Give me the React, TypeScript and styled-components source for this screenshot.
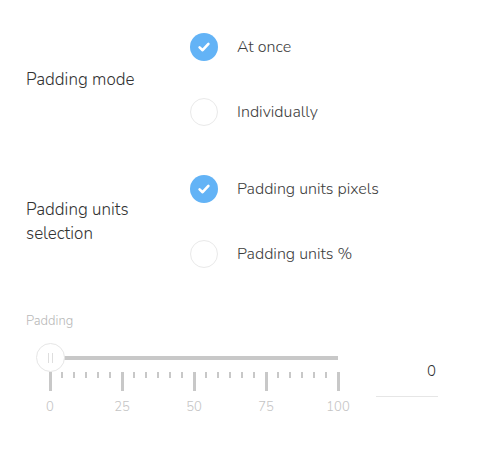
import React from "react";
import styled, { createGlobalStyle } from "styled-components";

const Global = createGlobalStyle`
  html, body { margin: 0; padding: 0; background: #fff; }
  body { font-family: "Nunito", "Noto Sans", "Open Sans", sans-serif; font-weight: 300; }
`;

const Page = styled.div`
  padding: 33px 0 0 26px;
  width: 480px;
  box-sizing: border-box;
`;

const Section = styled.div<{ $gapAfter: number }>`
  display: flex;
  align-items: center;
  margin-bottom: ${(p) => p.$gapAfter}px;
`;

const Label = styled.div`
  width: 164px;
  font-size: 17px;
  line-height: 24px;
  color: #333;
`;

const Options = styled.div`
  display: flex;
  flex-direction: column;
  gap: 37px;
`;

const Option = styled.div`
  display: flex;
  align-items: center;
  gap: 19px;
  height: 28px;
  font-size: 16px;
  color: #3d3d3d;
`;

const Circle = styled.div<{ $checked: boolean }>`
  width: 28px;
  height: 28px;
  border-radius: 50%;
  box-sizing: border-box;
  display: flex;
  align-items: center;
  justify-content: center;
  background: ${(p) => (p.$checked ? "#63b3f6" : "#fff")};
  border: ${(p) => (p.$checked ? "none" : "1px solid #e9e9e9")};
`;

const SliderTitle = styled.div`
  font-size: 13px;
  line-height: 16px;
  color: #b8b8b8;
  margin-top: -2px;
  margin-bottom: 17px;
`;

const SliderRow = styled.div`
  display: flex;
  align-items: flex-start;
`;

const SliderArea = styled.div`
  position: relative;
  margin-left: 24px;
  width: 288px;
  height: 80px;
`;

const Track = styled.div`
  position: absolute;
  left: 0;
  right: 0;
  top: 10px;
  height: 4px;
  background: #c8c8c8;
`;

const Thumb = styled.div`
  position: absolute;
  left: -14px;
  top: -3px;
  width: 29px;
  height: 29px;
  box-sizing: border-box;
  border-radius: 50%;
  background: #fff;
  border: 1px solid #e6e6e6;
  display: flex;
  align-items: center;
  justify-content: center;
  gap: 3px;
  &::before,
  &::after {
    content: "";
    width: 1px;
    height: 10px;
    background: #dedede;
  }
`;

const Tick = styled.div<{ $major: boolean }>`
  position: absolute;
  top: 26px;
  width: ${(p) => (p.$major ? 3 : 2)}px;
  margin-left: -1px;
  height: ${(p) => (p.$major ? 19 : 6)}px;
  background: #c8c8c8;
`;

const TickLabel = styled.div`
  position: absolute;
  top: 53px;
  transform: translateX(-50%);
  font-size: 13px;
  line-height: 16px;
  color: #c4c4c4;
`;

const ValueBox = styled.div`
  margin-left: 38px;
  margin-top: 15px;
  width: 62px;
  height: 36px;
  box-sizing: border-box;
  border-bottom: 1px solid #e6e6e6;
  text-align: right;
  padding-right: 2px;
  font-size: 15px;
  line-height: 20px;
  color: #333;
`;

const Check = () => (
  <svg width="14" height="14" viewBox="0 0 14 14">
    <path
      d="M2.6 7.4 L5.6 10.2 L11.4 3.9"
      fill="none"
      stroke="#fff"
      strokeWidth="2.6"
      strokeLinecap="round"
      strokeLinejoin="round"
    />
  </svg>
);

const RadioOption = ({ checked, label }: { checked: boolean; label: string }) => (
  <Option>
    <Circle $checked={checked}>{checked && <Check />}</Circle>
    <span>{label}</span>
  </Option>
);

export default function App() {
  const ticks = Array.from({ length: 25 }, (_, i) => i);
  return (
    <>
      <Global />
      <Page>
        <Section $gapAfter={49}>
          <Label>Padding mode</Label>
          <Options>
            <RadioOption checked label="At once" />
            <RadioOption checked={false} label="Individually" />
          </Options>
        </Section>
        <Section $gapAfter={47}>
          <Label>
            Padding units
            <br />
            selection
          </Label>
          <Options>
            <RadioOption checked label="Padding units pixels" />
            <RadioOption checked={false} label="Padding units %" />
          </Options>
        </Section>
        <SliderTitle>Padding</SliderTitle>
        <SliderRow>
          <SliderArea>
            <Track />
            {ticks.map((i) => (
              <Tick key={i} $major={i % 6 === 0} style={{ left: i * 12 }} />
            ))}
            {[0, 25, 50, 75, 100].map((v) => (
              <TickLabel key={v} style={{ left: (v / 100) * 288 }}>
                {v}
              </TickLabel>
            ))}
            <Thumb />
          </SliderArea>
          <ValueBox>0</ValueBox>
        </SliderRow>
      </Page>
    </>
  );
}
